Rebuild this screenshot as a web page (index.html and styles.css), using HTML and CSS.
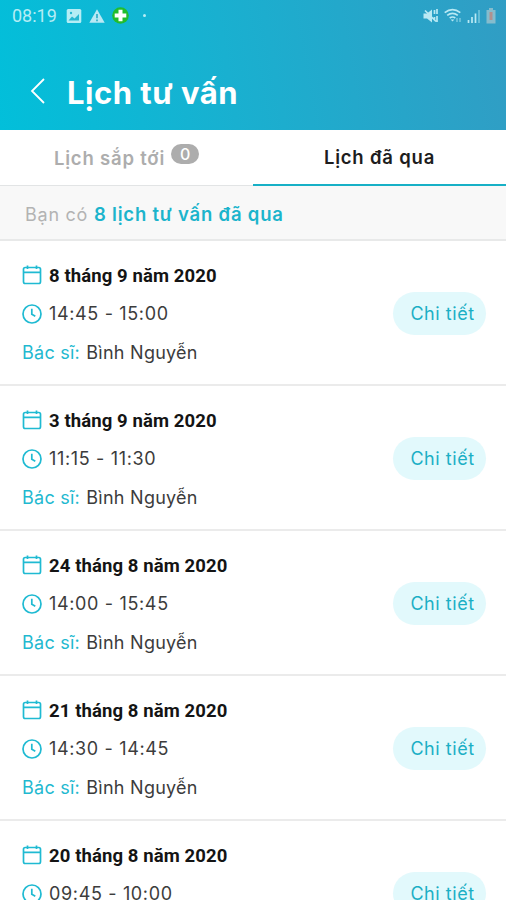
FILE: index.html
```html
<!DOCTYPE html>
<html lang="vi">

<head>
	<meta charset="UTF-8">
	<meta name="viewport" content="width=device-width, initial-scale=1.0">
	<title>Lịch tư vấn</title>
	<link rel="stylesheet" href="styles.css">
</head>

<body>
	<svg class="sprite" width="0" height="0">
		<symbol id="calendar" viewBox="0 0 20 20">
			<path d="M3.200 2.500h13.600a1.700 1.700 0 0 1 1.700 1.700v12.600a1.700 1.700 0 0 1-1.700 1.700H3.200a1.700 1.700 0 0 1-1.700-1.700V4.200A1.700 1.700 0 0 1 3.200 2.500zM1.500 7.300h17M5.500 .6v3.400M14.500 .6v3.400" />
		</symbol>
		<symbol id="clock" viewBox="0 0 20 20">
			<circle cx="10" cy="10" r="9" />
			<path d="M9.800 4.800v5.500l3.500 2" />
		</symbol>
	</svg>

	<header class="header">
		<div class="status">
			<span class="status-time">08:19</span>
			<svg class="icon-picture" width="16" height="16" viewBox="0 0 16 16">
				<rect x=".7" y="1" width="14.600" height="14" rx="1.500" />
				<path d="M2.500 12.500l3.500-4 2.500 2 4.500-4.500v6.500z" />
				<circle cx="5" cy="5" r="1.200" />
			</svg>
			<svg class="icon-warning" width="16" height="16" viewBox="0 0 16 16">
				<path class="fill" d="M8 1.300L15.700 14.700H.3z" />
				<path class="mark" d="M8 6v4.300M8 11.500v1.700" />
			</svg>
			<svg class="icon-health" width="17" height="17" viewBox="0 0 17 17">
				<circle cx="8.500" cy="8.500" r="8.300" />
				<path d="M8.500 2.700v11.600M2.700 8.500h11.600" />
			</svg>
			<span class="status-dot"></span>
			<div class="status-right">
				<svg width="16" height="16" viewBox="0 0 16 16">
					<path class="fill" d="M.5 5.500h3.500l5-4v13l-5-4H.5z" />
					<path class="line" d="M2 2.500l11 11M11.500 2v4M14 1v5M11.500 9v3M14 8v6" />
				</svg>
				<svg width="18" height="16" viewBox="0 0 18 16">
					<path class="line" d="M.7 4.700q7.800-6 15.600 0M3.200 7.400q5.300-4 10.600 0M5.700 10q2.800-2 5.600 0" />
					<path class="fill" d="M6.700 11.500h3.600l-1.800 2z" />
					<path class="thin" d="M13 10v4M16 14v-4" />
				</svg>
				<svg width="14" height="16" viewBox="0 0 14 16">
					<path class="line" d="M1.500 15v-3M5 15V9M8.500 15V5.500" />
					<path class="thin" d="M12 15V2" />
				</svg>
				<svg width="10" height="16" viewBox="0 0 10 16">
					<path class="battery" d="M3 0h4v2h2.500v13.500H.5V2H3z" />
					<path class="battery-low" d="M5 4v8" />
				</svg>
			</div>
		</div>
		<div class="title-bar">
			<svg class="back" width="16" height="28" viewBox="0 0 16 28">
				<path d="M14 2L2 14l12 12" />
			</svg>
			<h1>Lịch tư vấn</h1>
		</div>
	</header>

	<nav class="tabs">
		<a class="tab">Lịch sắp tới<span class="count">0</span></a>
		<a class="tab active">Lịch đã qua</a>
	</nav>

	<p class="summary">Bạn có <strong>8 lịch tư vấn đã qua</strong></p>

	<ul class="list">
		<li class="item">
			<div class="info">
				<div class="date"><svg class="icon"><use href="#calendar" /></svg><span>8 tháng 9 năm 2020</span></div>
				<div class="time"><svg class="icon"><use href="#clock" /></svg><span>14:45 - 15:00</span></div>
				<div class="doctor"><span class="label">Bác sĩ:</span> Bình Nguyễn</div>
			</div>
			<button class="detail">Chi tiết</button>
		</li>
		<li class="item">
			<div class="info">
				<div class="date"><svg class="icon"><use href="#calendar" /></svg><span>3 tháng 9 năm 2020</span></div>
				<div class="time"><svg class="icon"><use href="#clock" /></svg><span>11:15 - 11:30</span></div>
				<div class="doctor"><span class="label">Bác sĩ:</span> Bình Nguyễn</div>
			</div>
			<button class="detail">Chi tiết</button>
		</li>
		<li class="item">
			<div class="info">
				<div class="date"><svg class="icon"><use href="#calendar" /></svg><span>24 tháng 8 năm 2020</span></div>
				<div class="time"><svg class="icon"><use href="#clock" /></svg><span>14:00 - 15:45</span></div>
				<div class="doctor"><span class="label">Bác sĩ:</span> Bình Nguyễn</div>
			</div>
			<button class="detail">Chi tiết</button>
		</li>
		<li class="item">
			<div class="info">
				<div class="date"><svg class="icon"><use href="#calendar" /></svg><span>21 tháng 8 năm 2020</span></div>
				<div class="time"><svg class="icon"><use href="#clock" /></svg><span>14:30 - 14:45</span></div>
				<div class="doctor"><span class="label">Bác sĩ:</span> Bình Nguyễn</div>
			</div>
			<button class="detail">Chi tiết</button>
		</li>
		<li class="item">
			<div class="info">
				<div class="date"><svg class="icon"><use href="#calendar" /></svg><span>20 tháng 8 năm 2020</span></div>
				<div class="time"><svg class="icon"><use href="#clock" /></svg><span>09:45 - 10:00</span></div>
			</div>
			<button class="detail">Chi tiết</button>
		</li>
	</ul>
</body>

</html>
```

FILE: styles.css
```css
* {
	box-sizing: border-box;
}

body {
	margin: 0;
	background: #fff;
	color: #3c3c3c;
	font-family: Inter, sans-serif;
	font-size: 18px;
}

.sprite {
	display: block;
}

.header {
	height: 130px;
	background: linear-gradient(80deg, #02bfda 0%, #19b0d0 45%, #319dc4 100%);
	color: #fff;
}

.status {
	display: flex;
	align-items: center;
	height: 31px;
	padding: 0 10px 0 12px;
}

.status-time {
	width: 54px;
	font-family: Roboto, sans-serif;
	font-size: 18px;
	color: #b5edf5;
}

.status svg {
	flex: none;
}

.icon-picture rect {
	fill: #b5edf5;
}

.icon-picture path,
.icon-picture circle {
	fill: #27b8d2;
}

.icon-warning {
	margin-left: 7px;
}

.icon-warning .fill,
.status-right .fill {
	fill: #b9e9f4;
}

.icon-warning .mark {
	stroke: #27a9c4;
	stroke-width: 1.6;
}

.icon-health {
	margin-left: 7px;
}

.icon-health circle {
	fill: #21bd2d;
}

.icon-health path {
	stroke: #fff;
	stroke-width: 4;
}

.status-dot {
	width: 3px;
	height: 3px;
	margin-left: 14px;
	border-radius: 50%;
	background: #b5edf5;
}

.status-right {
	display: flex;
	gap: 5px;
	margin-left: auto;
}

.status-right .line,
.status-right .thin {
	fill: none;
	stroke: #b9e9f4;
	stroke-width: 1.7;
}

.status-right .thin {
	stroke: #6fc4dc;
}

.battery {
	fill: #85bccd;
}

.battery-low {
	stroke: #b0918f;
	stroke-width: 3;
}

.title-bar {
	display: flex;
	align-items: center;
	height: 60px;
	margin-top: 31px;
	padding: 0 30px;
}

.title-bar .back {
	margin-top: -2px;
	fill: none;
	stroke: #fff;
	stroke-width: 1.8;
}

h1 {
	margin: 0 0 0 21px;
	font-size: 31px;
	font-weight: 700;
	letter-spacing: .5px;
	white-space: nowrap;
}

.tabs {
	display: flex;
	height: 56px;
	border-bottom: 1px solid #e2e4e5;
}

.tab {
	display: flex;
	flex: 1;
	align-items: center;
	justify-content: center;
	height: 56px;
	color: #adadad;
	font-size: 18.500px;
	font-weight: 600;
	letter-spacing: .8px;
}

.tab.active {
	border-bottom: 2px solid #17b0c6;
	color: #1d1d1d;
}

.count {
	width: 28px;
	height: 20px;
	margin: -8px 0 0 6px;
	border-radius: 10px;
	background: #adadad;
	color: #fff;
	font-size: 16px;
	font-weight: 500;
	letter-spacing: 0;
	line-height: 20px;
	text-align: center;
}

.summary {
	height: 55px;
	margin: 0;
	padding-left: 25px;
	border-bottom: 2px solid #e8e9e9;
	background: #f8f8f8;
	color: #b3b3b3;
	letter-spacing: .75px;
	line-height: 57px;
}

.summary strong {
	color: #1cb4cc;
	font-size: 18.500px;
	font-weight: 600;
	letter-spacing: .8px;
}

.list {
	height: 659px;
	margin: 0;
	padding: 0;
	overflow: hidden;
	list-style: none;
}

.item {
	display: flex;
	justify-content: space-between;
	height: 145px;
	padding: 15px 20px 0 22px;
	border-bottom: 2px solid #ebebeb;
}

.date,
.time,
.doctor {
	display: flex;
	align-items: center;
	height: 38.500px;
	white-space: pre;
}

.date {
	color: #141414;
	font-family: Roboto, sans-serif;
	font-size: 18.500px;
	font-weight: 700;
	letter-spacing: .1px;
}

.date span {
	padding-top: 2px;
}

.time {
	letter-spacing: .65px;
}

.doctor {
	letter-spacing: .25px;
}

.icon {
	width: 20px;
	height: 20px;
	margin-right: 7px;
	fill: none;
	stroke: #1fbad2;
	stroke-width: 1.7;
}

.label {
	margin-right: 1px;
	color: #1fb9d0;
}

.detail {
	width: 93px;
	height: 43px;
	margin-top: 36px;
	padding: 0 0 0 6px;
	border: 0;
	border-radius: 22px;
	background: #e2f9fc;
	color: #1cafc5;
	font-family: inherit;
	font-size: 18px;
	letter-spacing: .55px;
}
```
